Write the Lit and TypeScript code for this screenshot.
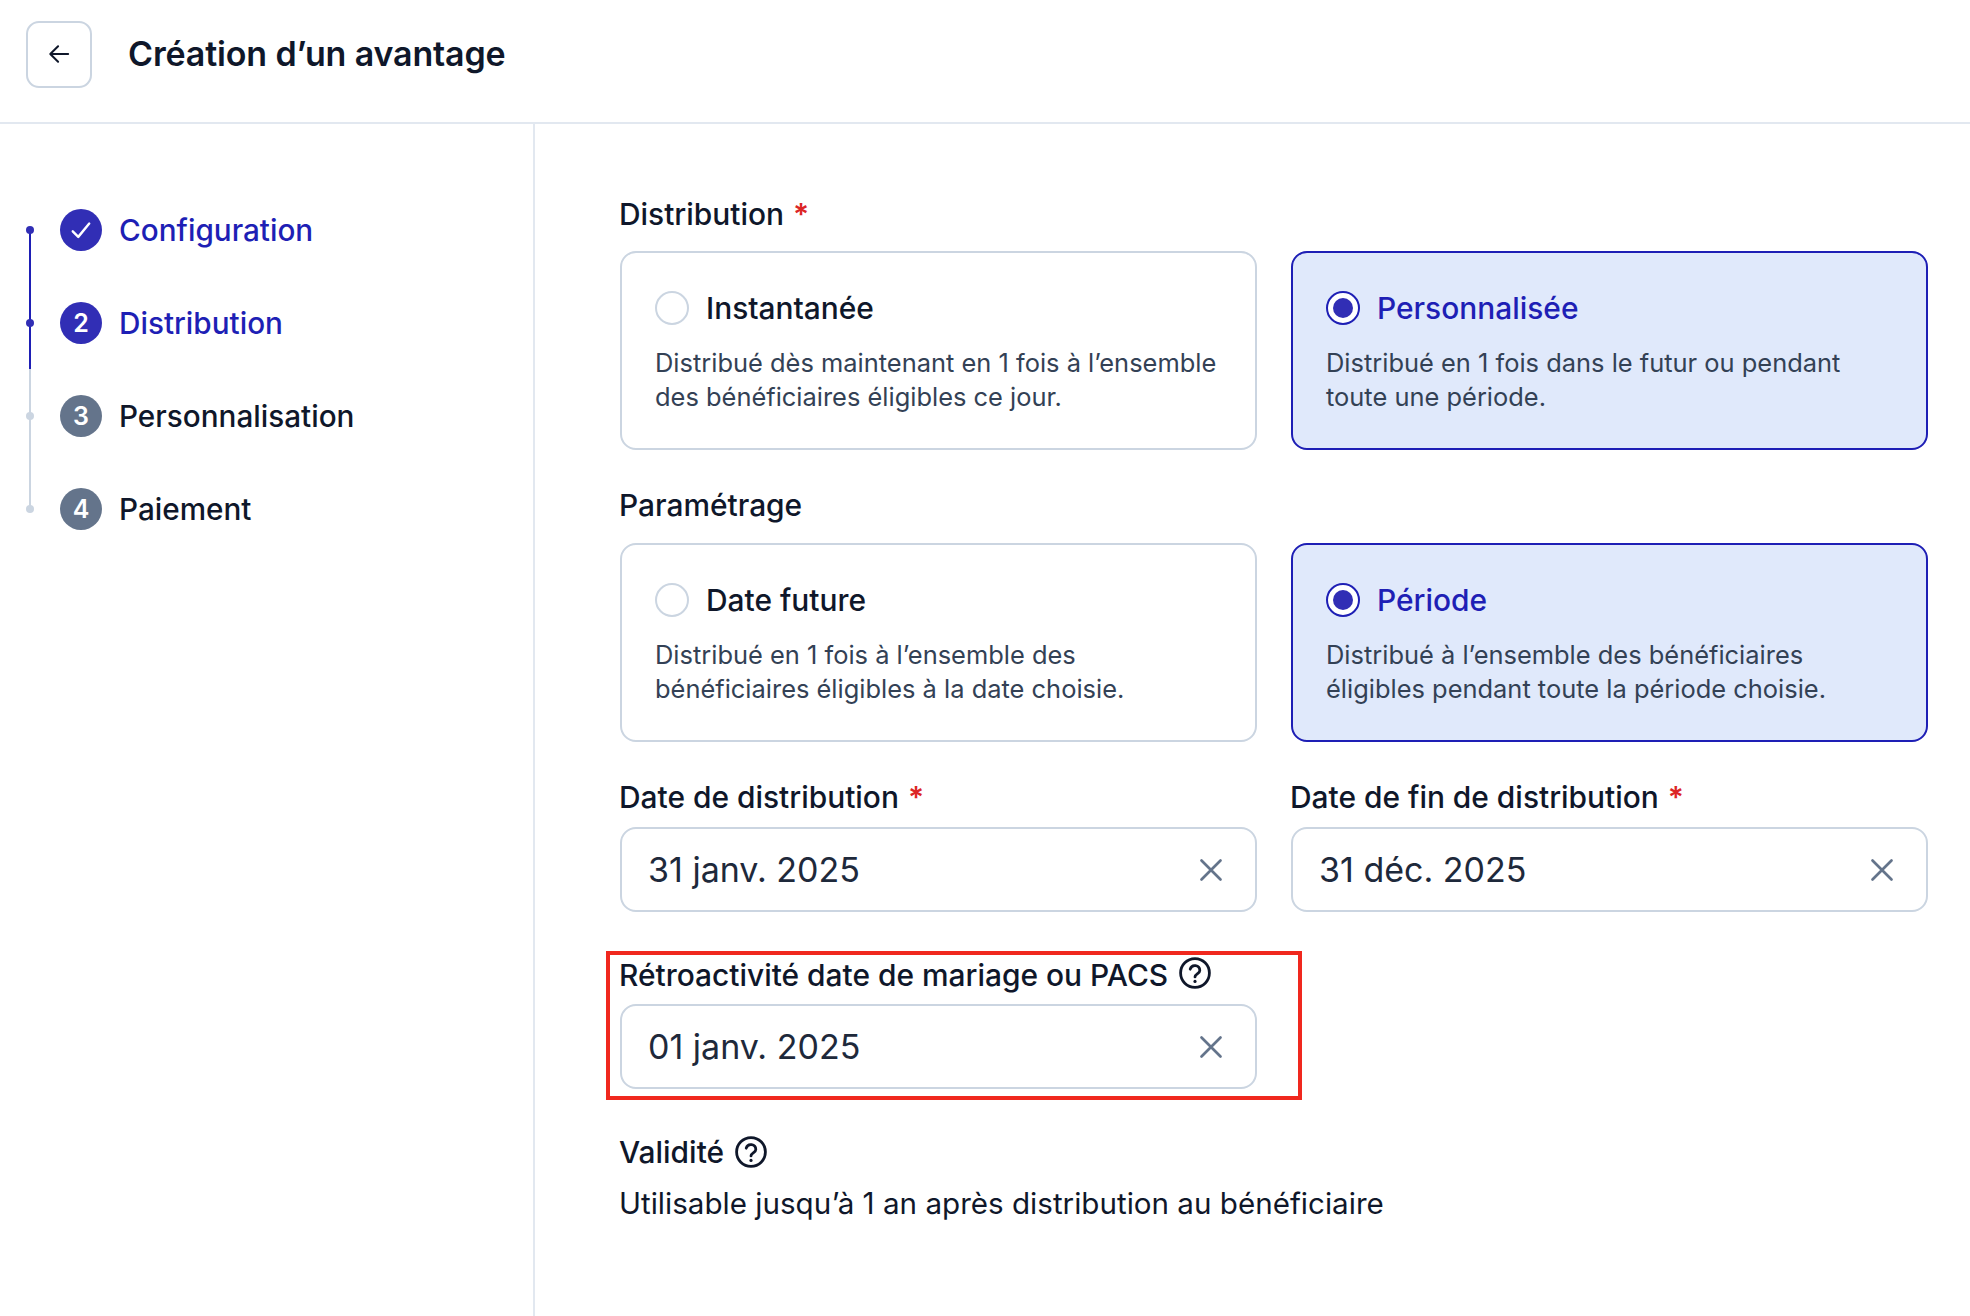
import { LitElement, html, css } from "lit";
import { customElement } from "lit/decorators.js";

const help = html`<svg class="help" viewBox="0 0 32 32" fill="none" stroke="#0f172a" stroke-width="2.8" stroke-linecap="round" stroke-linejoin="round"><circle cx="16" cy="16" r="14.4"/><path d="M11.2 12.2a4.9 4.9 0 0 1 9.6 1.3c0 3.2-4.8 3.6-4.8 6.4"/><path d="M16 24.4v.1" stroke-width="3.2"/></svg>`;
const cross = html`<svg class="x" viewBox="0 0 24 24" fill="none" stroke="#64748b" stroke-width="2.7" stroke-linecap="round"><path d="M2.5 2.5l19 19M21.5 2.5l-19 19"/></svg>`;

@customElement("app-root")
export class AppRoot extends LitElement {
  static styles = css`
    :host { display: block; width: 1970px; height: 1316px; background: #fff; font-family: Inter, "Liberation Sans", sans-serif; color: #0f172a; overflow: hidden; }
    header { height: 122px; border-bottom: 2px solid #e2e8f0; display: flex; align-items: center; padding-left: 26px; gap: 36px; }
    .back { width: 66px; height: 67px; box-sizing: border-box; border: 2px solid #cbd5e1; border-radius: 13px; display: flex; align-items: center; justify-content: center; margin-top: -14px; }
    .back svg { width: 22px; height: 22px; }
    h1 { margin: -14px 0 0; font-size: 34px; font-weight: 600; line-height: 40px; letter-spacing: -0.15px; }
    .body { display: grid; grid-template-columns: 535px 1fr; height: 1192px; }
    aside { border-right: 2px solid #e2e8f0; padding: 59px 0 0 26px; display: flex; flex-direction: column; position: relative; }
    .step { height: 93px; display: grid; grid-template-columns: 8px 68px auto; align-items: center; font-size: 29.7px; font-weight: 500; color: #0f172a; }
    .step.on { color: #1e1fb5; }
    .dot { width: 8px; height: 8px; border-radius: 50%; background: #cbd5e1; position: relative; z-index: 1; }
    .on .dot { background: #312eb5; }
    .num { width: 42px; height: 42px; margin-left: 26px; border-radius: 50%; background: #64748b; color: #fff; font-size: 25px; font-weight: 600; display: flex; align-items: center; justify-content: center; }
    .on .num { background: #312eb5; }
    .num svg { width: 22px; height: 22px; }
    .label { margin-left: 17px; white-space: nowrap; }
    .rail { position: absolute; left: 29px; width: 2px; }
    .rail.done { top: 105px; height: 140px; background: #1e1fb5; }
    .rail.todo { top: 245px; height: 140px; background: #cbd5e1; }
    main { padding: 0 42px 0 85px; display: flex; flex-direction: column; }
    .lab { font-size: 29.9px; font-weight: 500; line-height: 36px; display: flex; align-items: center; gap: 11px; white-space: nowrap; text-indent: -1px; }
    .lab.first { margin: 72px 0 19px; }
    .lab.second { margin: 37px 0 20px; }
    .star { color: #dc2626; font-weight: 600; margin-left: -1px; }
    .two { display: grid; grid-template-columns: 637px 637px; column-gap: 34px; }
    .card { box-sizing: border-box; height: 199px; border: 2px solid #cbd5e1; border-radius: 16px; padding: 37px 33px 0; }
    .card.sel { border-color: #1e1fb5; background: #e0e9fb; }
    .ct { display: flex; align-items: center; gap: 17px; font-size: 29.9px; font-weight: 500; line-height: 36px; }
    .sel .ct { color: #1e1fb5; }
    .radio { width: 34px; height: 34px; box-sizing: border-box; border-radius: 50%; border: 2px solid #cbd5e1; background: #fff; display: flex; align-items: center; justify-content: center; flex: none; }
    .sel .radio { border-color: #1e1fb5; }
    .sel .radio::after { content: ""; width: 20px; height: 20px; border-radius: 50%; background: #312eb5; }
    .card p { margin: 20px 0 0; font-size: 25.45px; line-height: 34px; color: #334155; white-space: nowrap; }
    .input { box-sizing: border-box; height: 85px; border: 2px solid #cbd5e1; border-radius: 16px; display: flex; align-items: center; justify-content: space-between; padding: 0 32px 0 26px; font-size: 34px; color: #1e293b; }
    .x { width: 24px; height: 24px; }
    .help { width: 32px; height: 32px; margin-top: -4px; }
    .valid .help { margin-top: 0; }
    .field { position: relative; width: 637px; }
    .mark { position: absolute; left: -14px; top: -6px; width: 696px; height: 149px; box-sizing: border-box; border: 4px solid #f0281e; pointer-events: none; }
    .row { margin-top: 37px; }
    .row .lab { margin-bottom: 12px; }
    .retro { margin-top: 45px; }
    .retro .lab { margin-bottom: 11px; }
    .valid { margin-top: 45px; }
    .txt { margin-top: 15px; font-size: 29.6px; line-height: 36px; color: #0f172a; white-space: nowrap; text-indent: -1px; }
  `;

  private step(n: string, label: string, on: boolean) {
    return html`<div class="step ${on ? "on" : ""}"><span class="dot"></span><span class="num">${n === "c"
      ? html`<svg viewBox="0 0 24 24" fill="none" stroke="#fff" stroke-width="2.6" stroke-linecap="round" stroke-linejoin="round"><path d="M3 13.5l6 6L21 5"/></svg>`
      : n}</span><span class="label">${label}</span></div>`;
  }

  private card(title: string, l1: string, l2: string, sel: boolean) {
    return html`<div class="card ${sel ? "sel" : ""}"><div class="ct"><span class="radio"></span>${title}</div><p>${l1}<br />${l2}</p></div>`;
  }

  render() {
    return html`
      <header>
        <div class="back"><svg viewBox="0 0 24 24" fill="none" stroke="#0f172a" stroke-width="2.2" stroke-linecap="round" stroke-linejoin="round"><path d="M22 12H3M11 3.5L2.5 12 11 20.5"/></svg></div>
        <h1>Création d’un avantage</h1>
      </header>
      <div class="body">
        <aside>
          <span class="rail done"></span>
          <span class="rail todo"></span>
          ${this.step("c", "Configuration", true)}
          ${this.step("2", "Distribution", true)}
          ${this.step("3", "Personnalisation", false)}
          ${this.step("4", "Paiement", false)}
        </aside>
        <main>
          <div class="lab first">Distribution <span class="star">*</span></div>
          <div class="two">
            ${this.card("Instantanée", "Distribué dès maintenant en 1 fois à l’ensemble", "des bénéficiaires éligibles ce jour.", false)}
            ${this.card("Personnalisée", "Distribué en 1 fois dans le futur ou pendant", "toute une période.", true)}
          </div>
          <div class="lab second">Paramétrage</div>
          <div class="two">
            ${this.card("Date future", "Distribué en 1 fois à l’ensemble des", "bénéficiaires éligibles à la date choisie.", false)}
            ${this.card("Période", "Distribué à l’ensemble des bénéficiaires", "éligibles pendant toute la période choisie.", true)}
          </div>
          <div class="two row">
            <div><div class="lab">Date de distribution <span class="star">*</span></div><div class="input">31 janv. 2025 ${cross}</div></div>
            <div><div class="lab">Date de fin de distribution <span class="star">*</span></div><div class="input">31 déc. 2025 ${cross}</div></div>
          </div>
          <div class="field retro">
            <div class="lab">Rétroactivité date de mariage ou PACS ${help}</div>
            <div class="input">01 janv. 2025 ${cross}</div>
            <div class="mark"></div>
          </div>
          <div class="valid">
            <div class="lab">Validité ${help}</div>
            <div class="txt">Utilisable jusqu’à 1 an après distribution au bénéficiaire</div>
          </div>
        </main>
      </div>
    `;
  }
}
